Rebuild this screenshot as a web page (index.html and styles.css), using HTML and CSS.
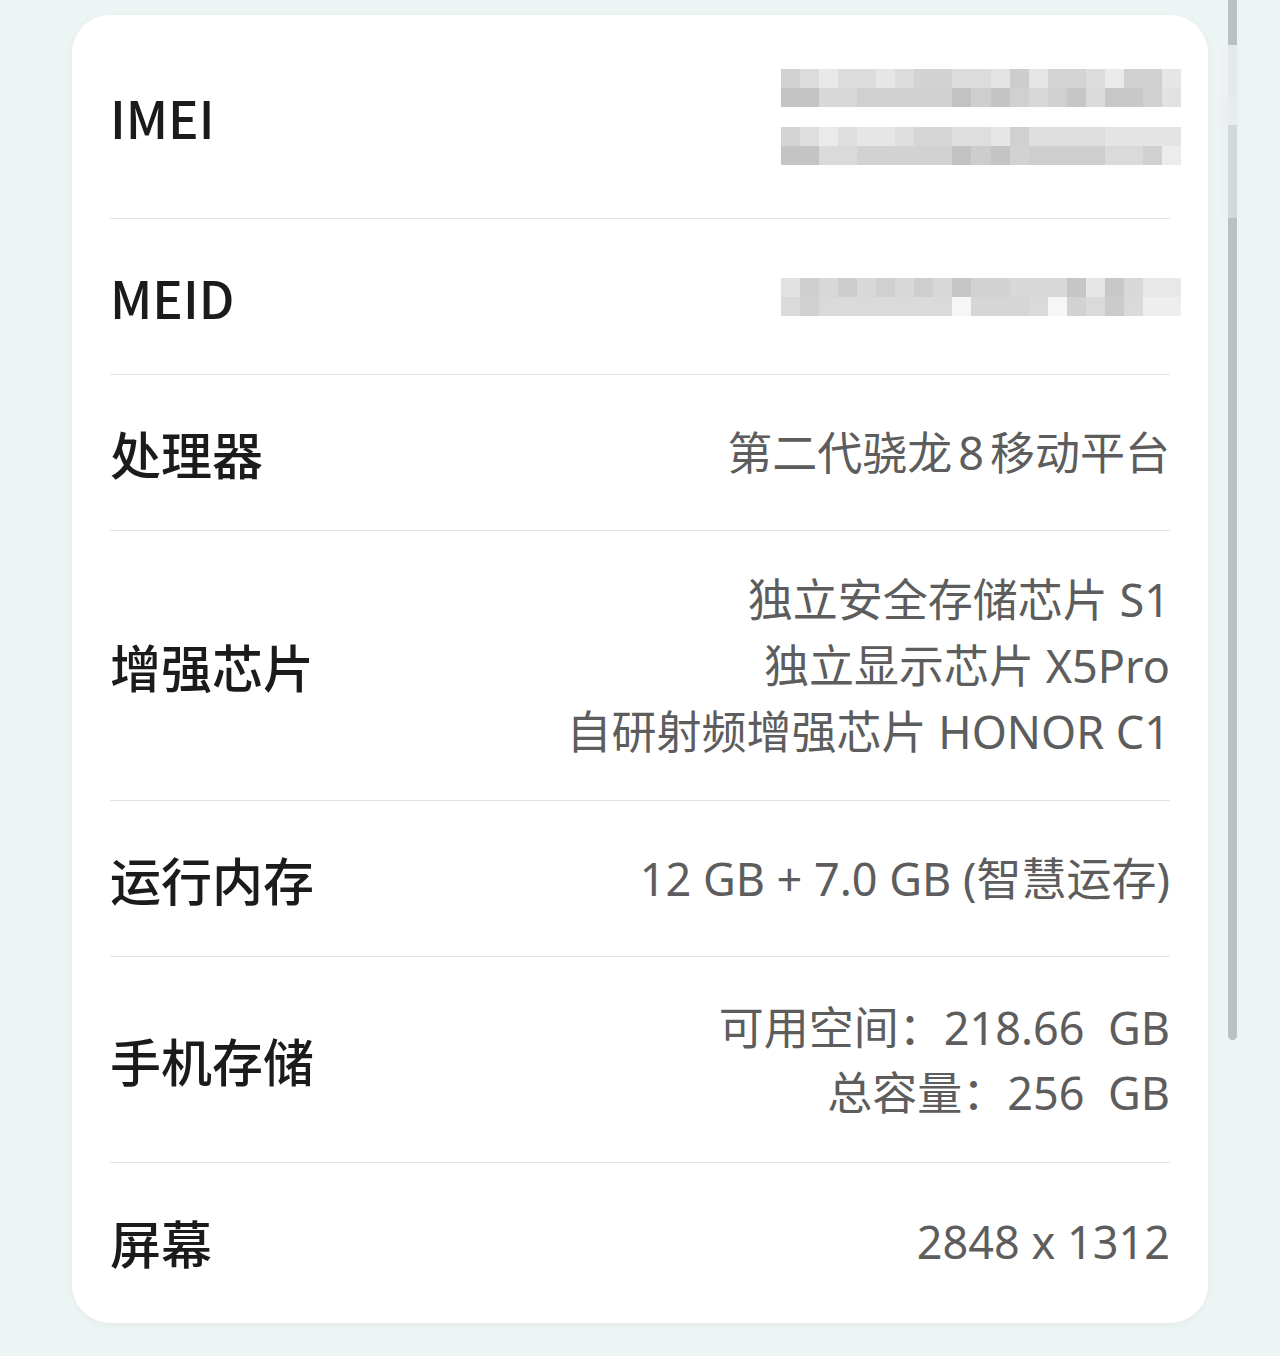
FILE: index.html
```html
<!DOCTYPE html>
<html lang="zh-CN">
<head>
    <meta charset="UTF-8">
    <meta name="viewport" content="width=device-width, initial-scale=1.0">
    <link rel="stylesheet" href="styles.css">
    <title>关于手机</title>
</head>
<body>
    <div class="scrollbar"></div>
    <div class="scroll-glare glare-top"></div>
    <div class="scroll-glare glare-mid"></div>

    <main class="info-card">
        <!-- IMEI / MEID are pixelated in the original screenshot -->
        <div class="info-row row-imei">
            <div class="info-label">IMEI</div>
            <div class="info-value masked">
                <svg class="mosaic" viewBox="0 0 21 2" preserveAspectRatio="none" shape-rendering="crispEdges">
                    <rect x="0" y="0" width="21" height="1" fill="#dcdcdc"/>
                    <rect x="0" y="1" width="21" height="1" fill="#d0d0d0"/>
                    <rect x="0" y="0" width="1" height="1" fill="#d2d2d2"/>
                    <rect x="2" y="0" width="1" height="1" fill="#e9e9e9"/>
                    <rect x="5" y="0" width="1" height="1" fill="#e6e6e6"/>
                    <rect x="7" y="0" width="2" height="1" fill="#d3d3d3"/>
                    <rect x="11" y="0" width="1" height="1" fill="#e3e3e3"/>
                    <rect x="12" y="0" width="1" height="1" fill="#cdcdcd"/>
                    <rect x="13" y="0" width="1" height="1" fill="#e6e6e6"/>
                    <rect x="14" y="0" width="2" height="1" fill="#d4d4d4"/>
                    <rect x="17" y="0" width="1" height="1" fill="#eaeaea"/>
                    <rect x="18" y="0" width="2" height="1" fill="#d0d0d0"/>
                    <rect x="20" y="0" width="1" height="1" fill="#e6e6e6"/>
                    <rect x="0" y="1" width="2" height="1" fill="#c4c4c4"/>
                    <rect x="2" y="1" width="2" height="1" fill="#d8d8d8"/>
                    <rect x="9" y="1" width="1" height="1" fill="#c2c2c2"/>
                    <rect x="10" y="1" width="1" height="1" fill="#cecece"/>
                    <rect x="11" y="1" width="1" height="1" fill="#c4c4c4"/>
                    <rect x="13" y="1" width="1" height="1" fill="#d8d8d8"/>
                    <rect x="15" y="1" width="1" height="1" fill="#c6c6c6"/>
                    <rect x="16" y="1" width="1" height="1" fill="#dadada"/>
                    <rect x="17" y="1" width="2" height="1" fill="#c8c8c8"/>
                    <rect x="20" y="1" width="1" height="1" fill="#e2e2e2"/>
                </svg>
                <svg class="mosaic" viewBox="0 0 21 2" preserveAspectRatio="none" shape-rendering="crispEdges">
                    <rect x="0" y="0" width="21" height="1" fill="#dedede"/>
                    <rect x="0" y="1" width="21" height="1" fill="#d2d2d2"/>
                    <rect x="0" y="0" width="1" height="1" fill="#d4d4d4"/>
                    <rect x="2" y="0" width="1" height="1" fill="#eaeaea"/>
                    <rect x="4" y="0" width="2" height="1" fill="#e6e6e6"/>
                    <rect x="7" y="0" width="2" height="1" fill="#d6d6d6"/>
                    <rect x="11" y="0" width="1" height="1" fill="#e6e6e6"/>
                    <rect x="12" y="0" width="1" height="1" fill="#d0d0d0"/>
                    <rect x="17" y="0" width="4" height="1" fill="#e4e4e4"/>
                    <rect x="0" y="1" width="2" height="1" fill="#c4c4c4"/>
                    <rect x="2" y="1" width="2" height="1" fill="#dadada"/>
                    <rect x="9" y="1" width="1" height="1" fill="#c2c2c2"/>
                    <rect x="10" y="1" width="1" height="1" fill="#cdcdcd"/>
                    <rect x="11" y="1" width="1" height="1" fill="#c4c4c4"/>
                    <rect x="13" y="1" width="4" height="1" fill="#cecece"/>
                    <rect x="17" y="1" width="2" height="1" fill="#dadada"/>
                    <rect x="19" y="1" width="1" height="1" fill="#d0d0d0"/>
                    <rect x="20" y="1" width="1" height="1" fill="#ececec"/>
                </svg>
            </div>
        </div>

        <div class="info-row">
            <div class="info-label">MEID</div>
            <div class="info-value masked">
                <svg class="mosaic" viewBox="0 0 21 2" preserveAspectRatio="none" shape-rendering="crispEdges">
                    <rect x="0" y="0" width="21" height="1" fill="#d8d8d8"/>
                    <rect x="0" y="1" width="21" height="1" fill="#dadada"/>
                    <rect x="0" y="0" width="1" height="1" fill="#e2e2e2"/>
                    <rect x="1" y="0" width="1" height="1" fill="#cecece"/>
                    <rect x="3" y="0" width="1" height="1" fill="#cdcdcd"/>
                    <rect x="5" y="0" width="1" height="1" fill="#d0d0d0"/>
                    <rect x="7" y="0" width="1" height="1" fill="#cecece"/>
                    <rect x="9" y="0" width="1" height="1" fill="#c6c6c6"/>
                    <rect x="10" y="0" width="2" height="1" fill="#d2d2d2"/>
                    <rect x="15" y="0" width="1" height="1" fill="#c6c6c6"/>
                    <rect x="16" y="0" width="1" height="1" fill="#e6e6e6"/>
                    <rect x="17" y="0" width="1" height="1" fill="#c8c8c8"/>
                    <rect x="19" y="0" width="2" height="1" fill="#e8e8e8"/>
                    <rect x="1" y="1" width="1" height="1" fill="#d0d0d0"/>
                    <rect x="9" y="1" width="1" height="1" fill="#f6f6f6"/>
                    <rect x="10" y="1" width="3" height="1" fill="#d6d6d6"/>
                    <rect x="14" y="1" width="1" height="1" fill="#f6f6f6"/>
                    <rect x="15" y="1" width="1" height="1" fill="#d2d2d2"/>
                    <rect x="17" y="1" width="1" height="1" fill="#cbcbcb"/>
                    <rect x="19" y="1" width="2" height="1" fill="#eeeeee"/>
                </svg>
            </div>
        </div>

        <div class="info-row">
            <div class="info-label">处理器</div>
            <div class="info-value">第二代骁龙<span class="num">8</span>移动平台</div>
        </div>

        <div class="info-row row-chips">
            <div class="info-label">增强芯片</div>
            <div class="info-value">
                <div>独立安全存储芯片 S1</div>
                <div>独立显示芯片 X5Pro</div>
                <div>自研射频增强芯片 HONOR C1</div>
            </div>
        </div>

        <div class="info-row">
            <div class="info-label">运行内存</div>
            <div class="info-value">12 GB + 7.0 GB (智慧运存)</div>
        </div>

        <div class="info-row row-storage">
            <div class="info-label">手机存储</div>
            <div class="info-value">
                <div>可用空间：218.66&nbsp; GB</div>
                <div>总容量：256&nbsp; GB</div>
            </div>
        </div>

        <div class="info-row row-last">
            <div class="info-label">屏幕</div>
            <div class="info-value">2848 x 1312</div>
        </div>
    </main>
</body>
</html>
```

FILE: styles.css
```css
body {
    margin: 0;
    padding: 15px 0 33px 72px;
    background-color: #edf5f4;
    font-family: "Noto Sans", "Noto Sans CJK SC", sans-serif;
    position: relative;
}

.info-card {
    width: 1136px;
    box-sizing: border-box;
    padding: 0 38px;
    background-color: #ffffff;
    border-radius: 38px;
    box-shadow: 0 2px 6px rgba(160, 180, 178, 0.15);
}

.info-row {
    display: flex;
    align-items: center;
    justify-content: space-between;
    padding: 45px 0 44px;
    border-bottom: 1px solid #e2e2e2;
}

.row-imei {
    padding: 54px 0 53px;
}

.row-chips {
    padding: 36px 0 35px;
}

.row-storage {
    padding: 38px 0 37px;
}

.row-storage .info-value {
    line-height: 65px;
}

.row-last {
    border-bottom: none;
    padding: 46px 0 48px;
}

.info-label {
    font-family: "Noto Sans CJK SC", "Noto Sans", sans-serif;
    font-size: 51px;
    font-weight: 500;
    color: #1b1b1b;
    line-height: 66px;
    white-space: nowrap;
}

.info-value {
    font-size: 45px;
    color: #5d5d5d;
    line-height: 66px;
    text-align: right;
    white-space: nowrap;
}

.num {
    margin: 0 6px;
}

.info-value.masked {
    display: flex;
    flex-direction: column;
    gap: 20px;
    margin-right: -11px;
}

.mosaic {
    display: block;
    width: 400px;
    height: 38px;
}

.scrollbar {
    position: absolute;
    left: 1228px;
    top: 0;
    width: 9px;
    height: 1040px;
    background-color: #bcc0c0;
    border-radius: 0 0 5px 5px;
}

.scroll-glare {
    position: absolute;
    left: 1219px;
    width: 20px;
    background-color: rgba(236, 240, 240, 0.85);
}

.glare-top {
    top: 45px;
    height: 80px;
}

.glare-mid {
    top: 98px;
    height: 120px;
    opacity: 0.6;
}
```
